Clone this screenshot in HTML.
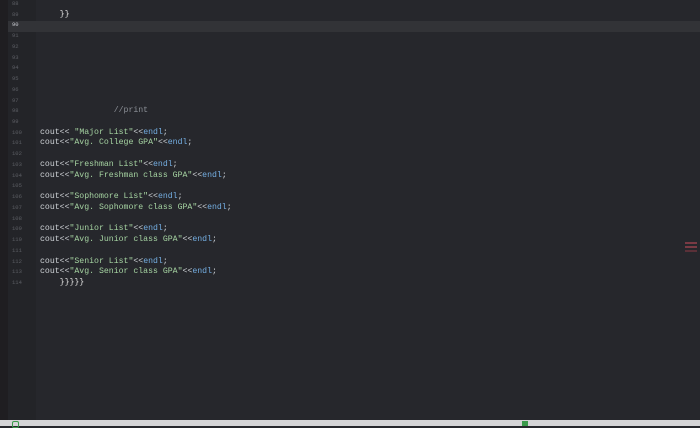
<!DOCTYPE html>
<html><head><style>
html,body{margin:0;padding:0;width:700px;height:426px;overflow:hidden;background:#26272c;}
.strip{position:absolute;left:0;top:0;width:8px;height:420px;background:#1f1e21;}
.gut{position:absolute;left:8px;top:0;width:28px;height:420px;background:#232428;}
.hl{position:absolute;left:8px;top:21px;width:692px;height:11px;background:#323337;}
.code{position:absolute;left:0;top:-1px;width:700px;font-family:"Liberation Mono",monospace;font-size:8.2px;line-height:10.73px;}
.ln{position:absolute;left:12px;width:22px;color:#5c5e64;font-size:5.5px;white-space:pre;}
.t{position:absolute;left:40px;color:#d0d4d8;white-space:pre;}
.s{color:#a6d4a2}.k{color:#74aee2}.c{color:#8b8f96}.o{color:#e0e0e0}
.status{position:absolute;left:0;top:420px;width:700px;height:6px;background:#d4d4d6;}
.mark{position:absolute;left:685px;width:12px;height:2px;background:#7a3a44;}
</style></head><body>
<div class="strip"></div><div class="gut"></div><div class="hl"></div>
<div class="mark" style="top:242px"></div><div class="mark" style="top:246px"></div><div class="mark" style="top:250px;background:#5a3038"></div>
<div class="status"></div>
<div style="position:absolute;left:12px;top:421px;width:5px;height:5px;border:1px solid #3a9a4a;border-radius:2px"></div>
<div style="position:absolute;left:522px;top:421px;width:6px;height:5px;background:#3a9a4a"></div>
<div class="code"><span class="ln" style="top:0">88</span><span class="ln" style="top:10.73px">89</span><span class="ln" style="top:21.46px;color:#c8cad0">90</span><span class="ln" style="top:32.19px">91</span><span class="ln" style="top:42.92px">92</span><span class="ln" style="top:53.65px">93</span><span class="ln" style="top:64.38px">94</span><span class="ln" style="top:75.11px">95</span><span class="ln" style="top:85.84px">96</span><span class="ln" style="top:96.57px">97</span><span class="ln" style="top:107.3px">98</span><span class="ln" style="top:118.03px">99</span><span class="ln" style="top:128.76px">100</span><span class="ln" style="top:139.49px">101</span><span class="ln" style="top:150.22px">102</span><span class="ln" style="top:160.95px">103</span><span class="ln" style="top:171.68px">104</span><span class="ln" style="top:182.41px">105</span><span class="ln" style="top:193.14px">106</span><span class="ln" style="top:203.87px">107</span><span class="ln" style="top:214.6px">108</span><span class="ln" style="top:225.33px">109</span><span class="ln" style="top:236.06px">110</span><span class="ln" style="top:246.79px">111</span><span class="ln" style="top:257.52px">112</span><span class="ln" style="top:268.25px">113</span><span class="ln" style="top:278.98px">114</span>
<span class="t" style="top:10.73px">    <span class="o">}}</span></span>
<span class="t" style="top:107.3px">               <span class="c">//print</span></span>
<span class="t" style="top:128.76px">cout&lt;&lt; <span class="s">"Major List"</span>&lt;&lt;<span class="k">endl</span>;</span>
<span class="t" style="top:139.49px">cout&lt;&lt;<span class="s">"Avg. College GPA"</span>&lt;&lt;<span class="k">endl</span>;</span>
<span class="t" style="top:160.95px">cout&lt;&lt;<span class="s">"Freshman List"</span>&lt;&lt;<span class="k">endl</span>;</span>
<span class="t" style="top:171.68px">cout&lt;&lt;<span class="s">"Avg. Freshman class GPA"</span>&lt;&lt;<span class="k">endl</span>;</span>
<span class="t" style="top:193.14px">cout&lt;&lt;<span class="s">"Sophomore List"</span>&lt;&lt;<span class="k">endl</span>;</span>
<span class="t" style="top:203.87px">cout&lt;&lt;<span class="s">"Avg. Sophomore class GPA"</span>&lt;&lt;<span class="k">endl</span>;</span>
<span class="t" style="top:225.33px">cout&lt;&lt;<span class="s">"Junior List"</span>&lt;&lt;<span class="k">endl</span>;</span>
<span class="t" style="top:236.06px">cout&lt;&lt;<span class="s">"Avg. Junior class GPA"</span>&lt;&lt;<span class="k">endl</span>;</span>
<span class="t" style="top:257.52px">cout&lt;&lt;<span class="s">"Senior List"</span>&lt;&lt;<span class="k">endl</span>;</span>
<span class="t" style="top:268.25px">cout&lt;&lt;<span class="s">"Avg. Senior class GPA"</span>&lt;&lt;<span class="k">endl</span>;</span>
<span class="t" style="top:278.98px">    <span class="o">}}}}}</span></span>
</div>
</body></html>
